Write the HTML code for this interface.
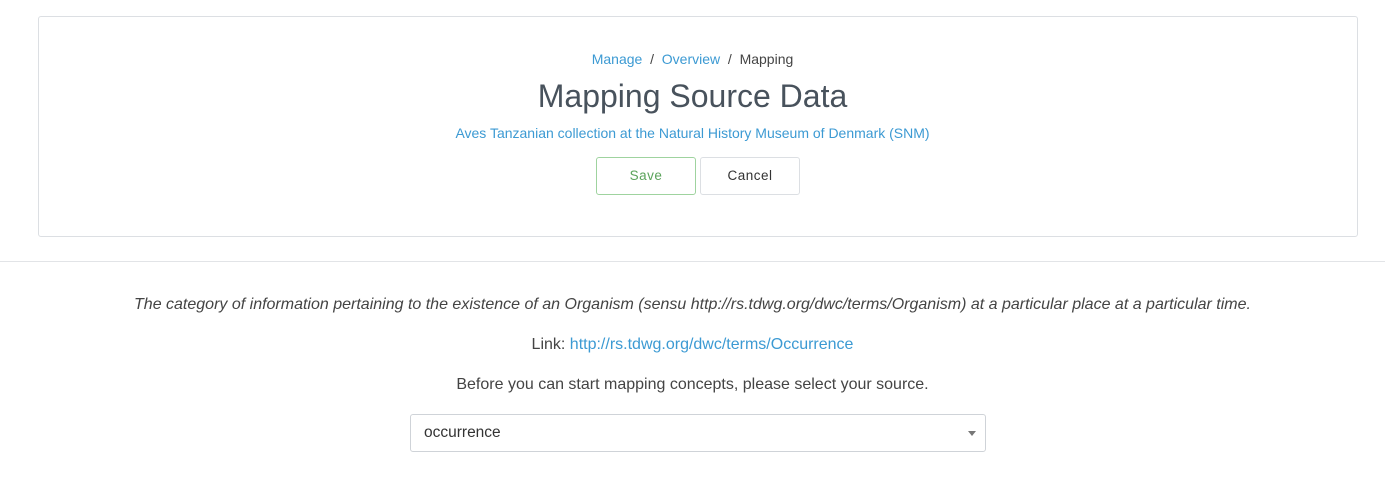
<!DOCTYPE html>
<html><head><style>
body{margin:0;width:1385px;height:494px;background:#fff;font-family:"Liberation Sans",sans-serif;position:relative;overflow:hidden}
.card{position:absolute;left:38px;top:16px;width:1318px;height:219px;border:1px solid #dcdfe3;border-radius:3px}
.c{position:absolute;left:0;width:1385px;text-align:center;white-space:nowrap}
a{color:#3c9ad3;text-decoration:none}
.btn{position:absolute;top:157px;height:38px;border:1px solid #dcdfe3;border-radius:3px;box-sizing:border-box;font-size:13.5px;line-height:36px;text-align:center;letter-spacing:.5px}
</style></head><body>
<div class="card"></div>
<div class="c" style="top:51px;font-size:14px;color:#444">
<a>Manage</a>&nbsp; / &nbsp;<a>Overview</a>&nbsp; / &nbsp;Mapping</div>
<div class="c" style="top:78px;font-size:32px;color:#48525c">Mapping Source Data</div>
<div class="c" style="top:125px;font-size:14px"><a>Aves Tanzanian collection at the Natural History Museum of Denmark (SNM)</a></div>
<div class="btn" style="left:596px;width:100px;color:#5ba35b;border-color:#9fd39f">Save</div>
<div class="btn" style="left:700px;width:100px;color:#333">Cancel</div>
<div style="position:absolute;left:0;top:261px;width:1385px;height:1px;background:#e2e4e7"></div>
<div class="c" style="top:296px;font-size:16px;color:#444;font-style:italic">The category of information pertaining to the existence of an Organism (sensu http://rs.tdwg.org/dwc/terms/Organism) at a particular place at a particular time.</div>
<div class="c" style="top:336px;font-size:16px;color:#444">Link: <a>http://rs.tdwg.org/dwc/terms/Occurrence</a></div>
<div class="c" style="top:376px;font-size:16px;color:#444">Before you can start mapping concepts, please select your source.</div>
<div style="position:absolute;left:410px;top:414px;width:574px;height:36px;border:1px solid #cfd3d8;border-radius:3px;font-size:15.5px;color:#333;line-height:36px;box-sizing:content-box">
<span style="padding-left:13px">occurrence</span>
<span style="position:absolute;right:9px;top:16px;width:0;height:0;border-left:4px solid transparent;border-right:4px solid transparent;border-top:5px solid #777"></span>
</div>
</body></html>
